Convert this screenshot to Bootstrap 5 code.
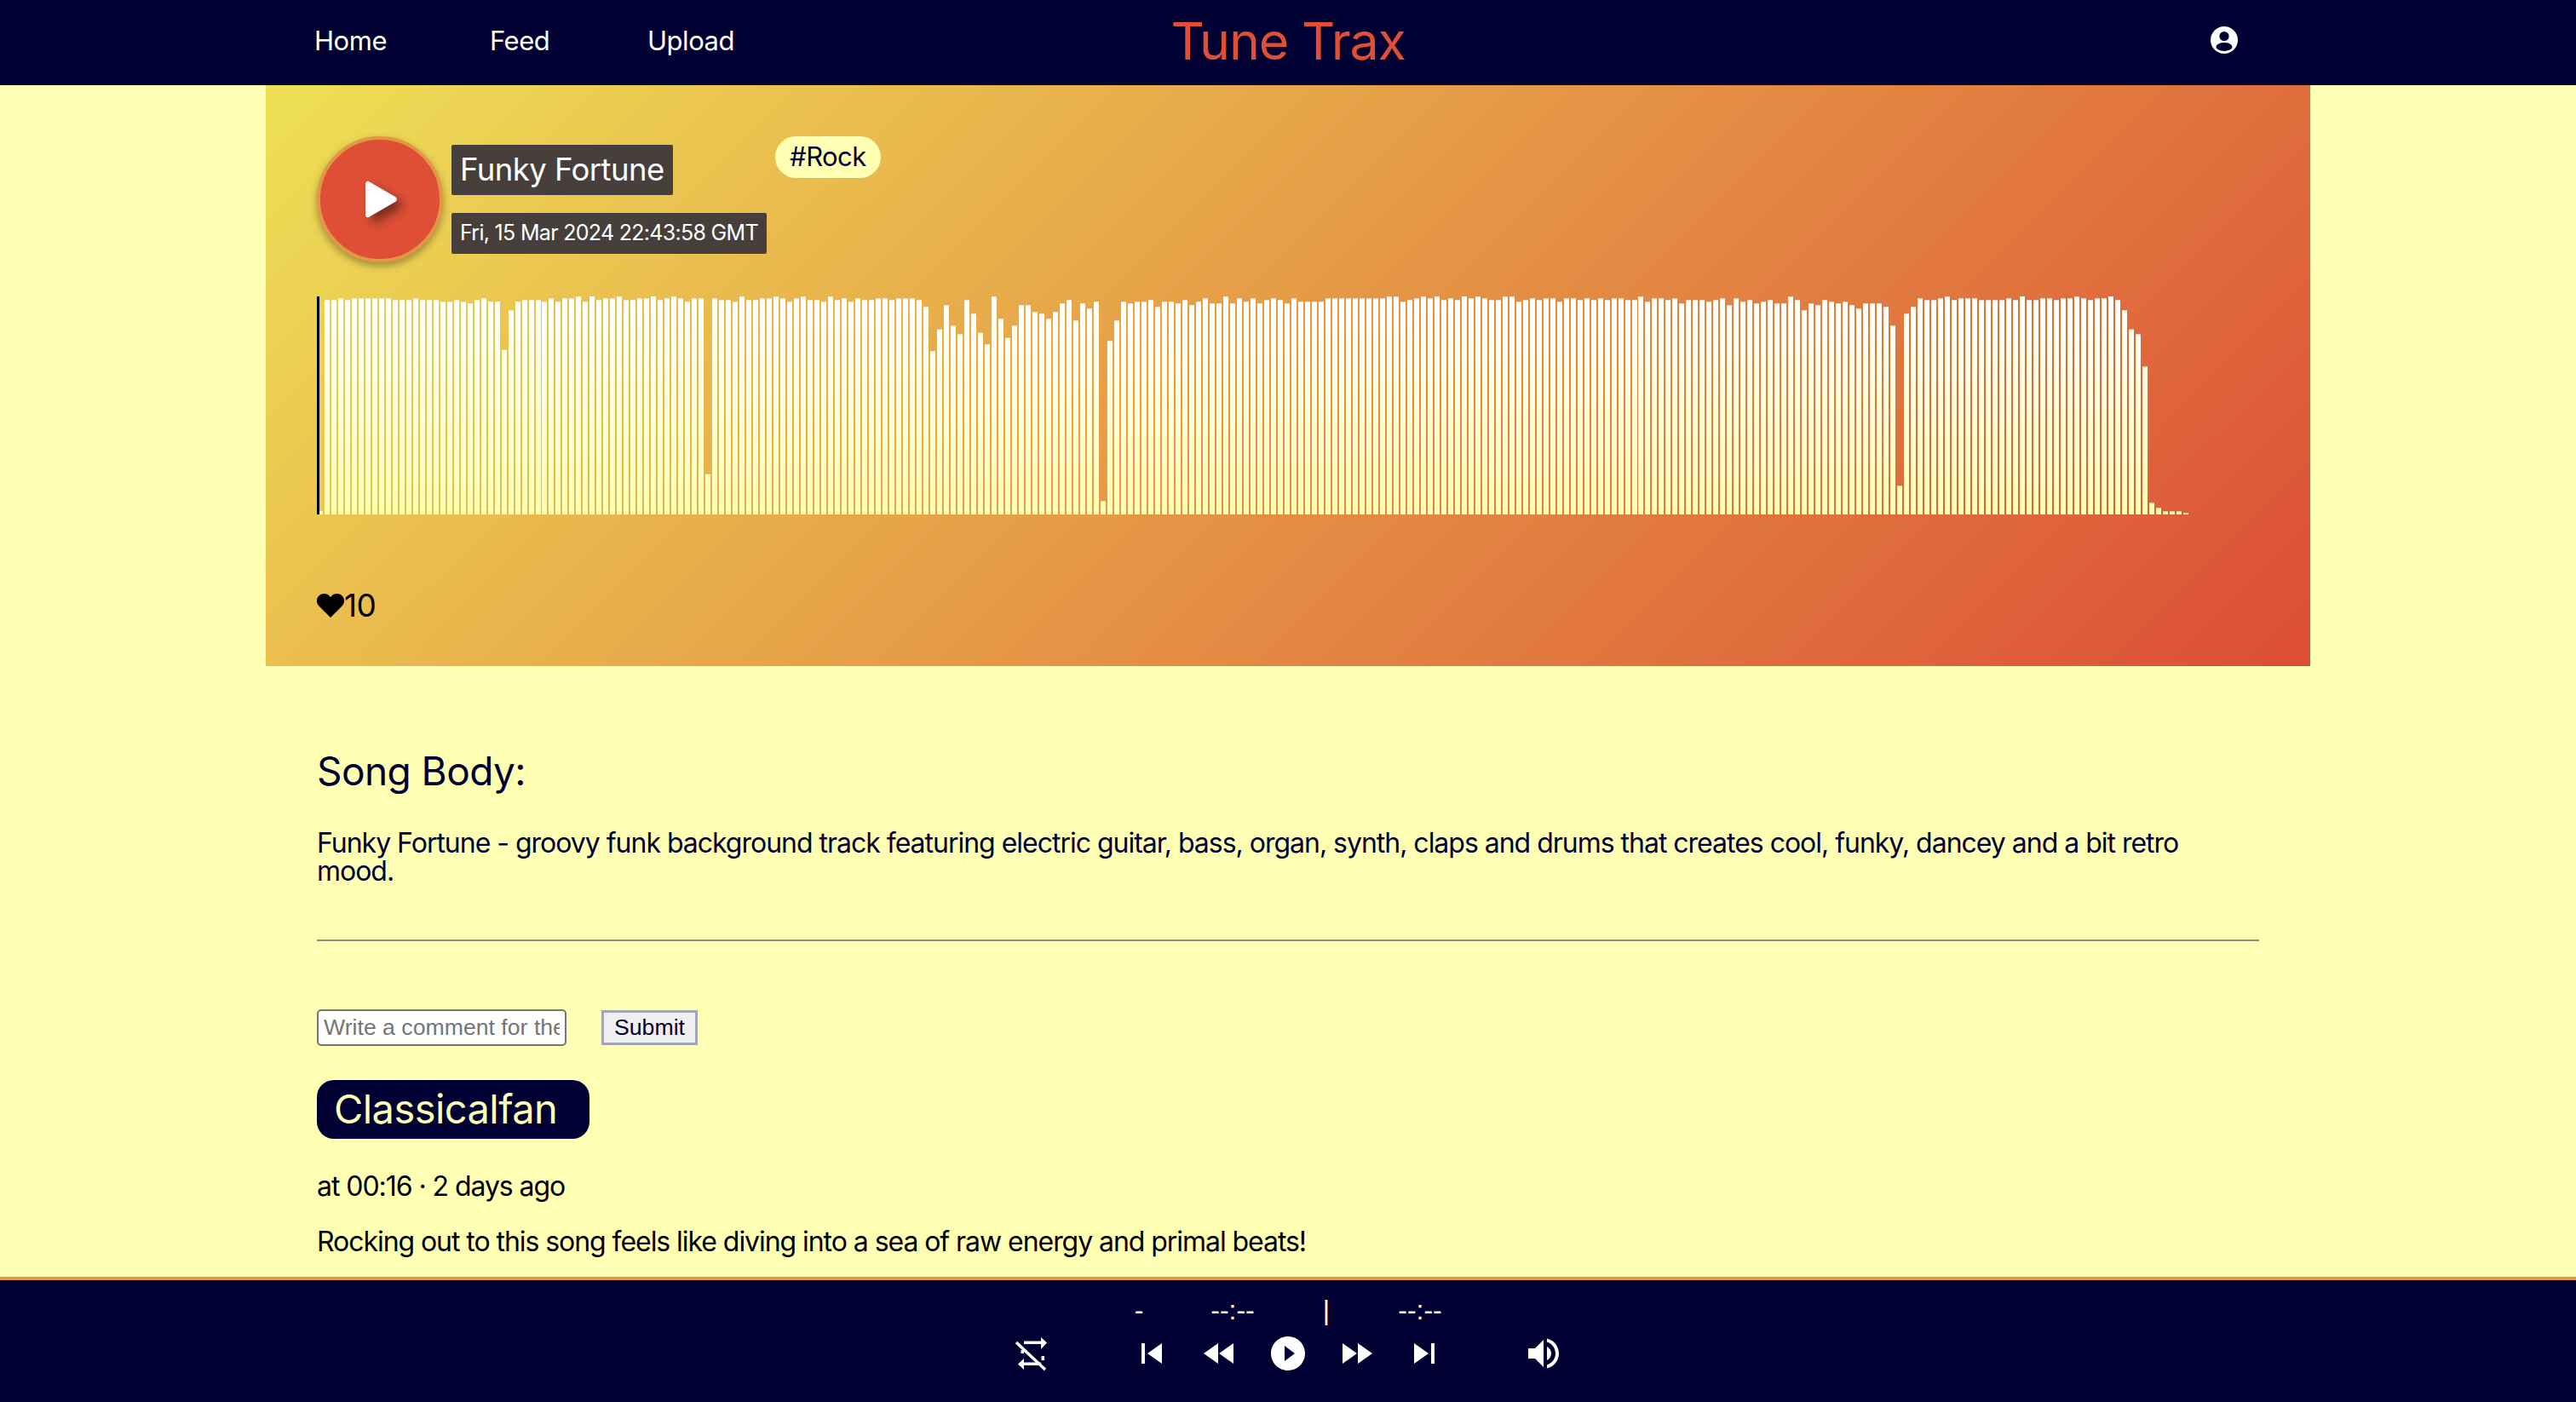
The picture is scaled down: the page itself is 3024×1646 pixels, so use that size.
<!DOCTYPE html>
<html lang="en">
<head>
<meta charset="utf-8">
<title>Tune Trax</title>
<link href="https://cdn.jsdelivr.net/npm/bootstrap@5.3.0/dist/css/bootstrap.min.css" rel="stylesheet">
<style>
html,body{height:100%;}
body{background:#ffffb3;color:#000033;font-family:"Inter","Lato",sans-serif;overflow:hidden;letter-spacing:-.035em;}
.app-shell{height:100vh;}
.top-bar{height:100px;background:#000033;padding:0;display:grid;grid-template-columns:1fr auto 1fr;align-items:center;}
.top-links{padding-left:369px;margin-top:-3px;}
.top-link{color:#fff;font-size:31px;letter-spacing:-.015em;text-decoration:none;display:block;}
.cell-home{width:206px;}
.cell-feed{width:185px;}
.brand-name{color:#de4f36;font-size:61px;line-height:1;letter-spacing:-.02em;margin:-3px 0 0;padding:0;}
.top-user{justify-self:start;margin-left:945px;margin-top:-6px;line-height:0;}
.page-main{overflow:hidden;min-height:0;}
.song-panel{width:2400px;height:682px;margin:0 auto;padding:60px 60px 0;background:linear-gradient(135deg,#eee055,#dc4d36);}
.play-disc{width:148px;height:148px;border-radius:50%;background:#de4f36;border:4px solid #e39744;box-shadow:0 4px 10px rgba(0,0,0,.35);padding:0;flex:none;display:flex;align-items:center;justify-content:center;}
.play-glyph{filter:drop-shadow(7px 7px 6px rgba(0,0,0,.45));margin-left:2px;}
.title-col{margin:10px 0 0 10px;gap:21px;}
.song-title,.song-date{background:#463f3b;color:#fff;border-radius:2px;padding:0 10px;white-space:nowrap;align-self:flex-start;display:flex;align-items:center;}
.song-title{font-size:36.500px;height:59px;margin:0;font-weight:400;}
.song-date{font-size:25px;letter-spacing:-.028em;height:48px;}
.genre-pill{background:#ffffb3;color:#000033;font-size:31px;border-radius:25px;height:49px;width:124px;margin-left:10px;display:flex;align-items:center;justify-content:center;}
.wave-svg{display:block;margin-top:40px;}
.like-row{margin-top:87px;font-size:37px;color:#000;line-height:40px;}
.body-area{width:2280px;margin:0 auto;}
.body-head{font-size:46px;font-weight:400;line-height:56px;margin:95px 0 0;}
.body-copy{font-size:32px;letter-spacing:-.0317em;line-height:33px;margin:40px 0 0;padding-right:60px;}
.split-line{border:0;border-top:2px solid #8d8d80;opacity:1;margin:64px 0 0;}
.comment-row{margin-top:80px;align-items:center;}
.comment-input{width:293px;height:43px;border:2px solid #767676;border-radius:5px;background:#fff;font:26.67px "Liberation Sans",sans-serif;letter-spacing:0;padding:0 6px;color:#000;}
.comment-input::placeholder{color:#757575;opacity:1;}
.comment-send{margin-left:41px;width:113px;height:41px;border:3px solid #a5a5b8;background:#efefef;color:#000033;font:26.67px "Liberation Sans",sans-serif;letter-spacing:0;padding:0;line-height:1;}
.author-chip{display:inline-block;background:#000033;color:#ffffb3;font-size:47px;height:69px;line-height:67px;width:320px;padding-left:20px;border-radius:20px;margin-top:40px;white-space:nowrap;}
.comment-time{font-size:32px;letter-spacing:-.033em;line-height:40px;color:#000;margin:36px 0 0;}
.comment-text{font-size:32px;letter-spacing:-.033em;line-height:40px;color:#000;margin:25px 0 0;white-space:nowrap;}
.player-bar{height:147px;flex:none;background:#000033;border-top:4px solid #e39744;color:#fff;font-family:"Liberation Sans",sans-serif;letter-spacing:0;}
.time-row{height:50px;padding:17px 20px 0 0;font-size:32px;line-height:36px;}
.time-cell{width:110px;text-align:center;}
.ctrl-row{height:48px;margin-top:12px;padding-right:8px;justify-content:center;}
.ctrl-row svg{display:block;flex:none;}
.ctrl-shuffle{margin:-6px 88px -6px 0;}
.ctrl-step{margin-left:32px;}
.ctrl-volume{margin-left:92px;}
</style>
</head>
<body>
<div class="app-shell d-flex flex-column">
  <nav class="top-bar navbar">
    <div class="top-links d-flex">
      <div class="cell-home"><a class="top-link" href="#">Home</a></div>
      <div class="cell-feed"><a class="top-link" href="#">Feed</a></div>
      <div><a class="top-link" href="#">Upload</a></div>
    </div>
    <div class="brand-name navbar-brand">Tune Trax</div>
    <div class="top-user">
      <svg width="32" height="32" viewBox="0 0 32 32"><circle cx="16" cy="16" r="16" fill="#fff"/><circle cx="16" cy="11.500" r="5.600" fill="#000033"/><ellipse cx="16" cy="24" rx="9.500" ry="5" fill="#000033"/></svg>
    </div>
  </nav>
  <main class="page-main flex-grow-1">
    <section class="song-panel">
      <div class="d-flex align-items-start">
        <button class="play-disc" aria-label="Play">
          <svg class="play-glyph" width="40" height="46" viewBox="0 0 40 46"><path d="M2 5.500C2 1.500 5 .5 7.500 3L37 20c2.500 2 2.500 4 0 6L7.500 43C5 45.500 2 44.500 2 40.500Z" fill="#fff"/></svg>
        </button>
        <div class="title-col d-flex flex-column">
          <h1 class="song-title">Funky Fortune</h1>
          <div class="song-date">Fri, 15 Mar 2024 22:43:58 GMT</div>
        </div>
        <div class="genre-pill">#Rock</div>
      </div>
      <svg class="wave-svg" id="wave" width="2280" height="256" viewBox="0 0 2280 256" xmlns="http://www.w3.org/2000/svg"></svg>
      <div class="like-row d-flex align-items-center">
        <svg width="32" height="28" viewBox="0 0 32 28"><path d="M16 28 2.500 14.500C-1 11-.8 5.500 2.500 2.500 6-.8 11.500-.6 14.500 2.500L16 4l1.500-1.500C20.500-.6 26-.8 29.500 2.500c3.300 3 3.500 8.500 0 12Z" fill="#000"/></svg>
        <span>10</span>
      </div>
    </section>
    <section class="body-area">
      <h2 class="body-head">Song Body:</h2>
      <p class="body-copy">Funky Fortune - groovy funk background track featuring electric guitar, bass, organ, synth, claps and drums that creates cool, funky, dancey and a bit retro mood.</p>
      <hr class="split-line">
      <div class="comment-row d-flex">
        <input class="comment-input" type="text" placeholder="Write a comment for the song">
        <button class="comment-send" type="button">Submit</button>
      </div>
      <div class="author-chip">Classicalfan</div>
      <p class="comment-time">at 00:16 · 2 days ago</p>
      <p class="comment-text">Rocking out to this song feels like diving into a sea of raw energy and primal beats!</p>
    </section>
  </main>
  <footer class="player-bar">
    <div class="time-row d-flex justify-content-center">
      <span class="time-cell">-</span><span class="time-cell">--:--</span><span class="time-cell">|</span><span class="time-cell">--:--</span>
    </div>
    <div class="ctrl-row d-flex align-items-center">
      <svg class="ctrl-shuffle" width="60" height="60" viewBox="0 0 60 60" fill="#fff"><path d="M22 15.500h20v3.500H22zM42 11l7 6.500-7 7.500zM22 40.500h20V44H22zM22 36l-7 6.500 7 6.500zM18.500 26H22v4h-3.500zM42.500 33H46v5h-3.500z"/><path d="M13 17l34 32" stroke="#fff" stroke-width="3.500" fill="none"/></svg>
      <svg width="48" height="48" viewBox="0 0 24 24" fill="#fff"><path d="M6 6h2v12H6zm3.500 6 8.500 6V6z"/></svg>
      <svg class="ctrl-step" width="48" height="48" viewBox="0 0 24 24" fill="#fff"><path d="M11 18V6l-8.500 6 8.500 6zm.5-6 8.500 6V6l-8.500 6z"/></svg>
      <svg class="ctrl-step" width="48" height="48" viewBox="0 0 24 24" fill="#fff"><path d="M12 2C6.480 2 2 6.480 2 12s4.480 10 10 10 10-4.480 10-10S17.520 2 12 2zm-2 14.500v-9l6 4.500-6 4.500z"/></svg>
      <svg class="ctrl-step" width="48" height="48" viewBox="0 0 24 24" fill="#fff"><path d="M4 18l8.500-6L4 6v12zm9-12v12l8.500-6L13 6z"/></svg>
      <svg class="ctrl-step" width="48" height="48" viewBox="0 0 24 24" fill="#fff"><path d="M6 18l8.500-6L6 6v12zM16 6v12h2V6h-2z"/></svg>
      <svg class="ctrl-volume" width="48" height="48" viewBox="0 0 24 24" fill="#fff"><path d="M3 9v6h4l5 5V4L7 9H3zm13.500 3c0-1.770-1.020-3.290-2.500-4.030v8.050c1.480-.73 2.500-2.250 2.500-4.020zM14 3.230v2.060c2.890.86 5 3.540 5 6.710s-2.110 5.850-5 6.710v2.060c4.010-.91 7-4.490 7-8.770s-2.990-7.860-7-8.770z"/></svg>
    </div>
  </footer>
</div>
<script src="https://cdn.jsdelivr.net/npm/bootstrap@5.3.0/dist/js/bootstrap.bundle.min.js"></script>
<script>
var tops=[780,37,37,31,37,31,31,31,31,31,31,37,37,37,31,37,37,37,43,43,37,43,49,37,31,43,43,212,73,43,37,37,37,43,31,43,31,31,25,43,24,37,31,31,25,37,37,31,31,24,37,31,25,31,43,31,31,650,31,37,37,43,25,37,37,31,31,25,31,43,31,25,37,37,43,25,37,31,43,31,37,37,31,31,37,31,31,31,37,61,217,140,55,127,157,37,
85,152,193,25,103,170,127,55,55,79,85,103,79,49,37,109,49,67,43,745,181,109,43,49,43,43,37,61,43,43,49,37,55,43,31,49,49,25,49,31,43,31,49,37,31,37,49,31,43,43,43,43,31,31,31,31,31,31,31,31,31,25,25,43,37,31,25,31,25,37,31,37,24,31,25,31,37,37,25,25,43,37,31,37,31,31,43,31,31,37,31,37,31,37,31,
31,37,37,25,43,31,31,37,31,49,37,37,37,43,37,31,55,31,43,37,49,43,37,49,49,25,37,73,49,55,37,43,49,43,55,67,49,49,49,61,127,691,85,61,31,37,37,31,25,37,31,31,31,37,37,37,37,31,37,24,37,37,31,31,37,31,31,25,31,37,31,31,24,37,73,140,157,271,751,769,781,781,781,787];
var NS="http://www.w3.org/2000/svg",svg=document.getElementById("wave");
var defs=document.createElementNS(NS,"defs");
defs.innerHTML='<linearGradient id="waveFill" gradientUnits="userSpaceOnUse" x1="0" y1="0" x2="0" y2="256"><stop offset="0" stop-color="#fff"/><stop offset="1" stop-color="#ffffb3"/></linearGradient>';
svg.appendChild(defs);
var first=3.7,last=2194,step=(last-first)/(tops.length-1);
tops.forEach(function(t,i){
  var h=(792-t)/3,r=document.createElementNS(NS,"rect");
  r.setAttribute("x",Math.round(first+step*i-3));
  r.setAttribute("y",(256-h).toFixed(2));
  r.setAttribute("width","6");
  r.setAttribute("height",h.toFixed(2));
  r.setAttribute("fill","url(#waveFill)");
  svg.appendChild(r);
});
var head=document.createElementNS(NS,"rect");
head.setAttribute("x","0");head.setAttribute("y","0");head.setAttribute("width","3");head.setAttribute("height","256");head.setAttribute("fill","#000033");
svg.appendChild(head);
</script>
</body>
</html>
